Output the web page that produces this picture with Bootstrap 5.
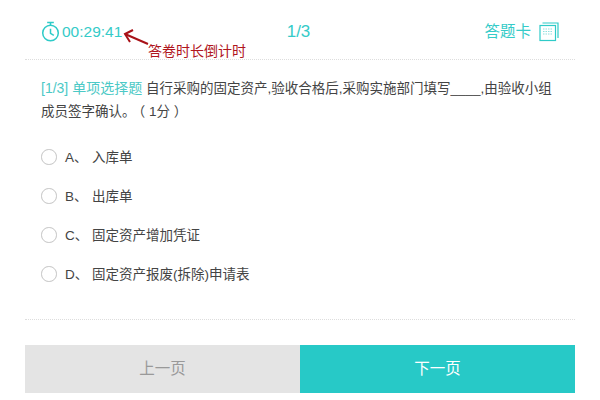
<!DOCTYPE html>
<html lang="zh">
<head>
<meta charset="utf-8">
<title>答题</title>
<link rel="stylesheet" href="https://cdn.jsdelivr.net/npm/bootstrap@5.3.0/dist/css/bootstrap.min.css">
<style>
html,body{height:400px;overflow:hidden;background:#fff}
body{font-family:"Liberation Sans","Noto Sans CJK SC",sans-serif;color:#444;font-size:13.5px;line-height:24px}
.quiz-wrap{width:550px;margin-left:25px;position:relative}
.quiz-head{height:60px;border-bottom:1px dotted #ddd;padding:4px 16px 0;color:#35cbc8;font-size:15.5px}
.head-slot{width:160px}
.timer-text{font-size:15.5px;margin-left:2px}
.head-frac{font-size:17px;padding-right:3px}
.quiz-body{padding:17px 16px 0;height:260px;border-bottom:1px dotted #ddd}
.q-stem{line-height:23px;margin:0 0 15px;font-size:13.5px}
.q-tag{color:#4cc9c6;font-size:14px}
.q-score{margin-left:3px}
.q-opt{height:39px;font-size:13.5px;color:#444}
.q-radio{width:15.5px;height:15.5px;border:1.5px solid #c4c4c4;border-radius:50%;background:#fff;margin:-1px 8.5px 0 0;flex:none}
.opt-letter{width:27px;flex:none}
.quiz-foot{margin-top:25px;height:48px}
.foot-btn{flex:1 1 50%;border:0;border-radius:0;font-size:15.5px;height:48px}
.foot-prev{background:#e4e4e4;color:#999}
.foot-next{background:#27c9c7;color:#fff}
.note-text{position:absolute;left:123px;top:42px;color:#b0161d;font-size:14px;line-height:18px}
.note-arrow{position:absolute;left:97px;top:29px}
</style>
</head>
<body>
<div class="quiz-wrap">
  <div class="quiz-head d-flex align-items-center justify-content-between">
    <div class="head-slot d-flex align-items-center">
      <svg width="19" height="21" viewBox="0 0 20 22" fill="none" stroke="#2fcbc8" stroke-width="1.6"><circle cx="10" cy="12.5" r="8.2"/><path d="M6.5 1.5h7M10 1.5v3M10 8v5l3.5 2"/></svg>
      <span class="timer-text">00:29:41</span>
    </div>
    <div class="head-frac">1/3</div>
    <div class="head-slot d-flex align-items-center justify-content-end">
      <span>答题卡</span>
      <svg class="ms-2" width="20" height="20" viewBox="0 0 20 20" fill="none" stroke="#2fcbc8" stroke-width="1.2"><rect x="1" y="3.5" width="15.5" height="15"/><path d="M3.5 1h15.5v15"/><path d="M4 7h10M4 9.5h10M4 12h10" stroke="#8fe0de" stroke-dasharray="1.5 1"/></svg>
    </div>
  </div>
  <svg class="note-arrow" width="28" height="18" viewBox="0 0 28 18" fill="none" stroke="#a81218" stroke-width="2"><path d="M26 15 3 5"/><path d="M11 1 3 5l5 8"/></svg>
  <div class="note-text">答卷时长倒计时</div>
  <div class="quiz-body">
    <p class="q-stem"><span class="q-tag">[1/3] 单项选择题</span> 自行采购的固定资产,验收合格后,采购实施部门填写____,由验收小组成员签字确认。<span class="q-score">（ 1分 ）</span></p>
    <div class="q-opt d-flex align-items-center"><span class="q-radio"></span><span class="opt-letter">A、</span><span>入库单</span></div>
    <div class="q-opt d-flex align-items-center"><span class="q-radio"></span><span class="opt-letter">B、</span><span>出库单</span></div>
    <div class="q-opt d-flex align-items-center"><span class="q-radio"></span><span class="opt-letter">C、</span><span>固定资产增加凭证</span></div>
    <div class="q-opt d-flex align-items-center"><span class="q-radio"></span><span class="opt-letter">D、</span><span>固定资产报废(拆除)申请表</span></div>
  </div>
  <div class="quiz-foot d-flex">
    <button type="button" class="btn foot-btn foot-prev">上一页</button>
    <button type="button" class="btn foot-btn foot-next">下一页</button>
  </div>
</div>
<script src="https://cdn.jsdelivr.net/npm/bootstrap@5.3.0/dist/js/bootstrap.bundle.min.js"></script>
</body>
</html>
